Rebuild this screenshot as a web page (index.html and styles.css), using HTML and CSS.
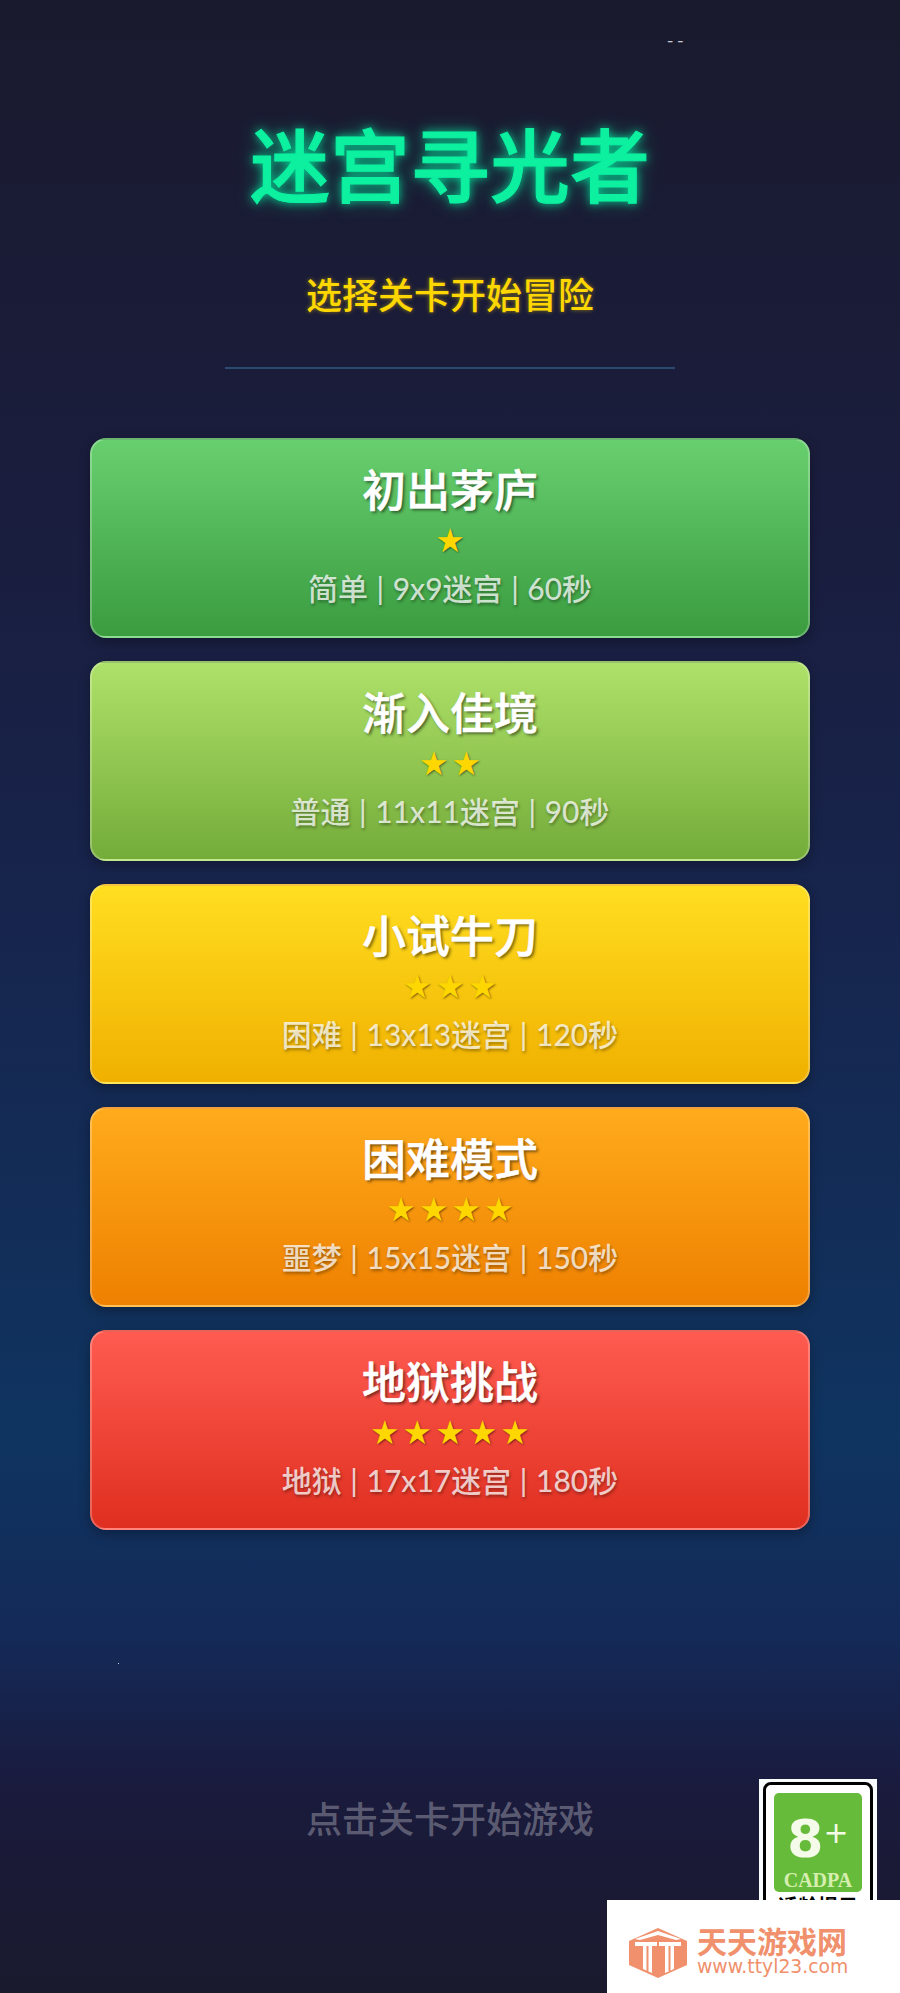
FILE: index.html
```html
<!DOCTYPE html>
<html lang="zh-CN">
<head>
    <meta charset="UTF-8">
    <meta name="viewport" content="width=device-width, initial-scale=1.0">
    <title>迷宫寻光者</title>
    <link rel="stylesheet" href="styles.css">
</head>
<body>
    <div class="page">
        <span class="top-dash">- -</span>
        <span class="speck"></span>

        <h1 class="title">迷宫寻光者</h1>
        <p class="subtitle">选择关卡开始冒险</p>
        <div class="divider"></div>

        <div class="levels">
            <div class="level level-1">
                <div class="level-name">初出茅庐</div>
                <div class="level-stars">★</div>
                <div class="level-info">简单 | 9x9迷宫 | 60秒</div>
            </div>
            <div class="level level-2">
                <div class="level-name">渐入佳境</div>
                <div class="level-stars">★★</div>
                <div class="level-info">普通 | 11x11迷宫 | 90秒</div>
            </div>
            <div class="level level-3">
                <div class="level-name">小试牛刀</div>
                <div class="level-stars">★★★</div>
                <div class="level-info">困难 | 13x13迷宫 | 120秒</div>
            </div>
            <div class="level level-4">
                <div class="level-name">困难模式</div>
                <div class="level-stars">★★★★</div>
                <div class="level-info">噩梦 | 15x15迷宫 | 150秒</div>
            </div>
            <div class="level level-5">
                <div class="level-name">地狱挑战</div>
                <div class="level-stars">★★★★★</div>
                <div class="level-info">地狱 | 17x17迷宫 | 180秒</div>
            </div>
        </div>

        <p class="hint">点击关卡开始游戏</p>

        <div class="age-badge">
            <div class="age-frame">
                <div class="age-green">
                    <div class="age-num">8<span class="age-plus">+</span></div>
                    <div class="age-org">CADPA</div>
                </div>
                <div class="age-note">适龄提示</div>
            </div>
        </div>

        <div class="watermark">
            <svg class="wm-logo" viewBox="0 0 58 50" width="58" height="50">
                <path fill="#f0906c" d="M29 0 L58 13 V37 L29 50 L0 37 V13 Z"/>
                <path fill="#fff" d="M6 11 L29 3 L52 11 L47 12 L29 7 L11 12 Z"/>
                <path fill="#fff" d="M6 14 H28 V18 H23 V45 L14 41 V18 H6 Z"/>
                <path fill="#fff" d="M30 14 H52 V18 H45 V41 L36 45 V18 H30 Z"/>
                <path fill="#f0906c" d="M17.500 18 H19.500 V43 H17.500 Z M39.500 18 H41.500 V43 H39.500 Z"/>
            </svg>
            <div class="wm-text">
                <div class="wm-name">天天游戏网</div>
                <div class="wm-url">www.ttyl23.com</div>
            </div>
        </div>
    </div>
</body>
</html>
```

FILE: styles.css
```css
body {
    margin: 0;
    padding: 0;
    font-family: "Noto Sans CJK SC", "Noto Sans", sans-serif;
}
.page {
    position: relative;
    height: 1993px;
    overflow: hidden;
    text-align: center;
    color: white;
    background: linear-gradient(180deg, #1a1a2e 0%, #1a1d3d 25%, #17244c 45%, #0f3460 72%, #142a58 82%, #1a1a3c 90%, #1a1a2e 100%);
}
.top-dash {
    position: absolute;
    left: 667px;
    top: 27px;
    font-size: 18px;
    line-height: 24px;
    color: #c8c8d0;
}
.speck {
    position: absolute;
    left: 118px;
    top: 1663px;
    width: 1px;
    height: 1px;
    background: #c8d0e0;
}
.title {
    margin: 121px 0 0;
    font-size: 80px;
    line-height: 80px;
    font-weight: 500;
    color: #0cf0a0;
    -webkit-text-stroke: 1px #0cf0a0;
    text-shadow: 0 0 10px rgba(0, 255, 170, 0.8), 0 0 20px rgba(0, 255, 170, 0.4);
}
.subtitle {
    margin: 70px 0 0;
    font-size: 36px;
    line-height: 44px;
    font-weight: 500;
    color: #ffd700;
    text-shadow: 0 0 4px rgba(255, 215, 0, 0.5);
}
.divider {
    width: 450px;
    height: 2px;
    margin: 52px auto 69px;
    background: #2a4a6e;
}
.levels {
    display: flex;
    flex-direction: column;
    gap: 23px;
    width: 720px;
    margin: 0 auto;
}
.level {
    box-sizing: border-box;
    height: 200px;
    padding-top: 20px;
    border: 2px solid rgba(255, 255, 255, 0.25);
    border-radius: 16px;
    box-shadow: 0 4px 12px rgba(0, 0, 0, 0.3);
}
.level-1 { background: linear-gradient(180deg, #68cf6f, #3a9c3f); }
.level-2 { background: linear-gradient(180deg, #aee169, #74ac3a); }
.level-3 { background: linear-gradient(180deg, #ffde20, #f0b000); }
.level-4 { background: linear-gradient(180deg, #ffab1c, #ee8000); }
.level-5 { background: linear-gradient(180deg, #ff5b50, #df2f20); }
.level-name {
    font-size: 44px;
    line-height: 56px;
    font-weight: 500;
    -webkit-text-stroke: 0.5px #fff;
    text-shadow: 2px 2px 3px rgba(0, 0, 0, 0.5);
}
.level-stars {
    margin-top: 7px;
    padding-left: 3px;
    font-family: "DejaVu Sans", sans-serif;
    font-size: 33px;
    line-height: 36px;
    letter-spacing: 3px;
    color: #ffd700;
    text-shadow: 1px 1px 2px rgba(0, 0, 0, 0.5);
}
.level-info {
    margin-top: 9px;
    font-family: Lato, "Noto Sans CJK SC", sans-serif;
    font-size: 30px;
    line-height: 40px;
    font-weight: 500;
    word-spacing: 1px;
    color: rgba(255, 255, 255, 0.75);
    text-shadow: 1px 2px 3px rgba(0, 0, 0, 0.35);
}
.hint {
    margin: 265px 0 0;
    font-size: 36px;
    line-height: 44px;
    font-weight: 500;
    color: rgba(255, 255, 255, 0.3);
}
.age-badge {
    position: absolute;
    left: 759px;
    top: 1779px;
    box-sizing: border-box;
    width: 118px;
    height: 140px;
    padding: 3px 4px;
    background: #f8fbfc;
}
.age-frame {
    box-sizing: border-box;
    height: 137px;
    padding: 8px;
    border: 3px solid #000;
    border-radius: 8px;
    background: #fff;
}
.age-green {
    height: 99px;
    border-radius: 5px;
    background: #67bb3a;
}
.age-num {
    padding-top: 15px;
    font-family: "DejaVu Sans", sans-serif;
    font-size: 52px;
    line-height: 50px;
    font-weight: 700;
    color: #f4fbe8;
}
.age-plus {
    font-size: 30px;
    font-weight: 400;
    vertical-align: 14px;
}
.age-org {
    margin-top: 5px;
    font-family: "Liberation Serif", serif;
    font-size: 20px;
    line-height: 22px;
    font-weight: 700;
    color: #d6efb0;
}
.age-note {
    margin-top: 2px;
    font-size: 20px;
    line-height: 24px;
    font-weight: 700;
    color: #000;
}
.watermark {
    position: absolute;
    left: 607px;
    top: 1900px;
    display: flex;
    align-items: center;
    box-sizing: border-box;
    width: 293px;
    height: 93px;
    padding: 12px 0 0 22px;
    background: #fff;
}
.wm-logo {
    margin-right: 10px;
}
.wm-text {
    margin-bottom: 4px;
    text-align: left;
    color: #f0906c;
}
.wm-name {
    font-size: 30px;
    line-height: 30px;
    font-weight: 700;
}
.wm-url {
    margin-top: 2px;
    font-family: "DejaVu Sans", sans-serif;
    font-size: 18.800px;
    line-height: 20px;
}
```
